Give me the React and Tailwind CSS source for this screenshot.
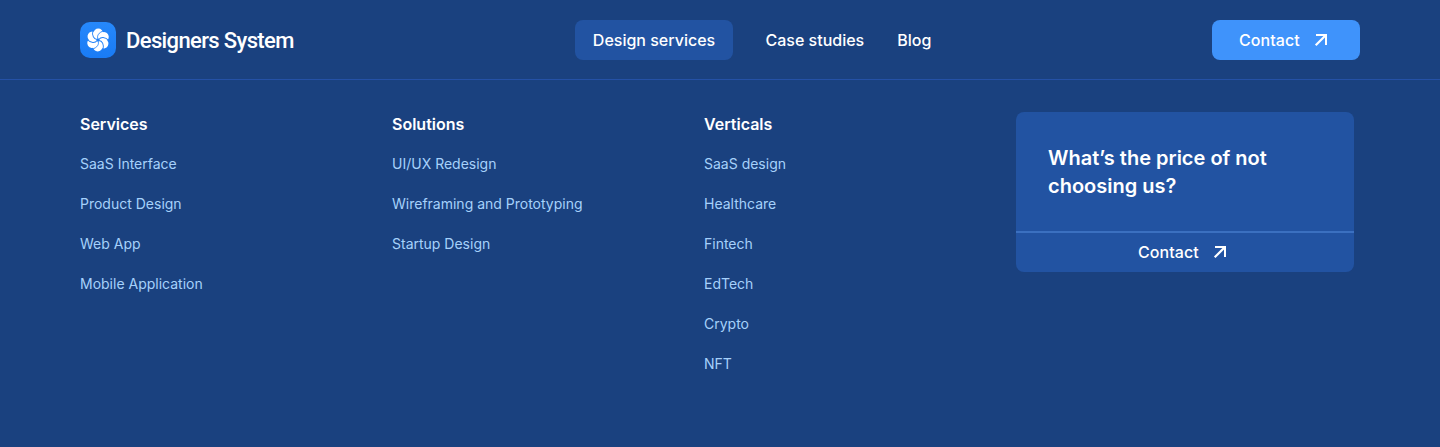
const columns = [
  { title: 'Services', links: ['SaaS Interface', 'Product Design', 'Web App', 'Mobile Application'] },
  { title: 'Solutions', links: ['UI/UX Redesign', 'Wireframing and Prototyping', 'Startup Design'] },
  { title: 'Verticals', links: ['SaaS design', 'Healthcare', 'Fintech', 'EdTech', 'Crypto', 'NFT'] },
];

const petals = [0, 60, 120, 180, 240, 300];

function Logo() {
  return (
    <svg width="36" height="36" viewBox="0 0 36 36" fill="none">
      <defs>
        <linearGradient id="logo-bg" x1="0" y1="0" x2="0" y2="36" gradientUnits="userSpaceOnUse">
          <stop stopColor="#2688fb" />
          <stop offset="1" stopColor="#197bf5" />
        </linearGradient>
      </defs>
      <rect width="36" height="36" rx="10" fill="url(#logo-bg)" />
      <circle cx="18" cy="18" r="7" fill="#fff" />
      {petals.map((angle) => (
        <circle key={angle} transform={`rotate(${angle} 18 18)`} cx="18.300" cy="11.300" r="4.800" fill="#fff" />
      ))}
      {petals.map((angle) => (
        <path
          key={angle}
          transform={`rotate(${angle} 18 18)`}
          d="M18 17C16.600 14 18.500 10.300 24 8.800"
          stroke="#2182f8"
          strokeWidth="0.900"
        />
      ))}
      <circle cx="18" cy="18" r="1.500" fill="#2182f8" />
    </svg>
  );
}

function Arrow() {
  return (
    <svg className="shrink-0" width="14" height="14" viewBox="0 0 14 14" fill="none" stroke="currentColor" strokeWidth="2">
      <path d="M1.700 12.300L12 2" strokeWidth="2.200" />
      <path d="M2 2H12V12" strokeLinejoin="miter" />
    </svg>
  );
}

export default function App() {
  return (
    <div className="h-[447px] bg-[#1a417f] font-['Inter',sans-serif] text-white">
      <header className="flex h-20 items-center justify-between border-b border-[#2451a6] px-20">
        <div className="flex w-[495px] items-center gap-[10px]">
          <Logo />
          <span className="pt-px font-['Roboto',sans-serif] text-[22px] font-medium tracking-[-0.63px]">Designers System</span>
        </div>
        <nav className="flex flex-1 items-center text-base font-medium">
          <a className="flex h-10 w-[158px] items-center justify-center rounded-lg bg-[#2253a2]">Design services</a>
          <a className="ml-[32.500px]">Case studies</a>
          <a className="ml-[33px]">Blog</a>
        </nav>
        <a className="flex h-10 w-[148px] items-center gap-[14px] rounded-lg bg-[#3f93fb] pl-[27px] text-base font-medium">
          <span className="w-[61px] tracking-[0.05px]">Contact</span>
          <Arrow />
        </a>
      </header>
      <main className="grid grid-cols-[312px_312px_312px_338px] items-start px-20 pt-8">
        {columns.map((column) => (
          <section key={column.title}>
            <h2 className="text-base font-semibold">{column.title}</h2>
            <ul className="mt-[18px] flex flex-col gap-5 text-sm leading-5 font-[380] text-[#a6d1fb]">
              {column.links.map((link) => (
                <li key={link}>{link}</li>
              ))}
            </ul>
          </section>
        ))}
        <aside className="h-40 overflow-hidden rounded-lg bg-[#2253a2]">
          <p className="h-[119px] px-8 pt-8 text-xl leading-7 font-semibold">
            What’s the price of not
            <br />
            choosing us?
          </p>
          <a className="flex h-[41px] items-center gap-[14px] border-t-2 border-[#3b70c0] pb-px pl-[122px] text-base font-medium">
            <span className="w-[61px] tracking-[0.05px]">Contact</span>
            <Arrow />
          </a>
        </aside>
      </main>
    </div>
  );
}
